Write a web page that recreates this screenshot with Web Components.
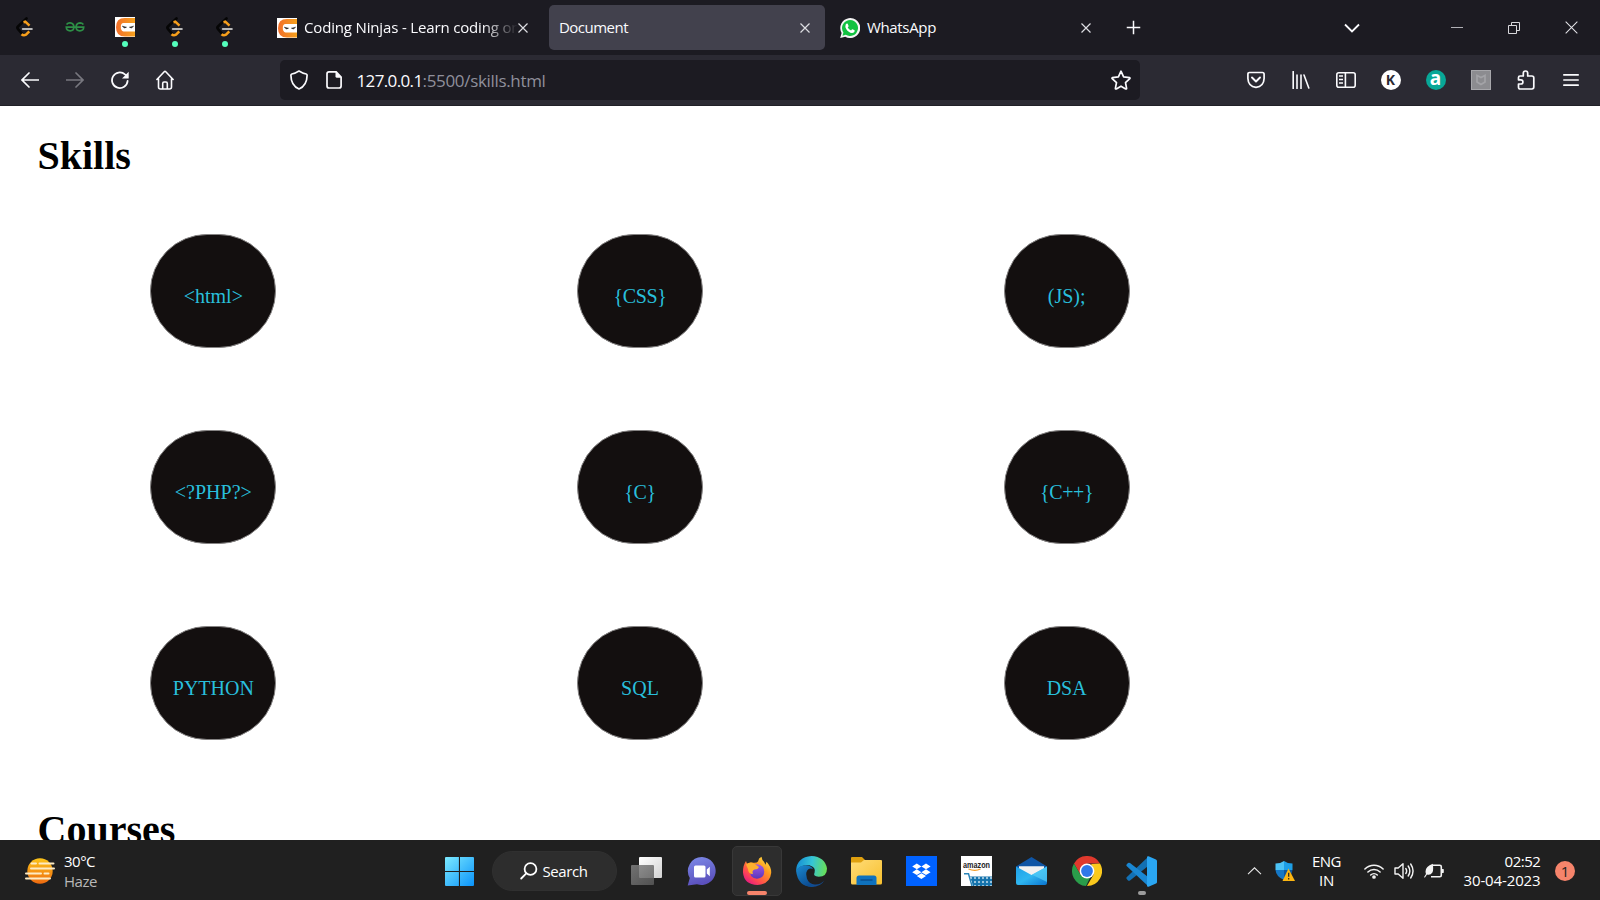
<!DOCTYPE html>
<html lang="en">
<head>
<meta charset="utf-8">
<title>Document</title>
<style>
  html, body { margin: 0; height: 100%; overflow: hidden; background: #fff; }
  body { font-family: "Open Sans", "Noto Sans", sans-serif; }
</style>
</head>
<body>
<desktop-screen></desktop-screen>
<script>
const LEET = `<svg viewBox="0 0 20 20"><path d="M11.500 1.500 3 9.500q-1.200 1.300 0 2.600l4.500 5" fill="none" stroke="#050505" stroke-width="2.600" stroke-linecap="round"/><path d="M8.500 5.200l1.800-.5 4.200 4M6.500 17.200q2 1.700 4.500.5l3.300-3.400" fill="none" stroke="#f79f1b" stroke-width="2.500"/><path d="M7.800 12h9" stroke="#b9b9b9" stroke-width="2.100" stroke-linecap="round"/></svg>`;

/* Icon name -> markup. Each drawing fills the box of its <ui-icon>. */
const ICONS = {
  leet: LEET,
  gfg: `<svg viewBox="0 0 20 20" fill="none" stroke="#2d8f46" stroke-width="1.700"><path d="M1.500 7.500Q3 5.800 5 5.900q3.900.3 3.900 4.100T5.200 13.800Q1.500 13.700 1.300 10.200H18.700Q18.500 13.700 14.800 13.800 11.100 13.800 11.100 10T15 5.900q2 0 3.400 1.600"/></svg>`,
  ninja: `<svg viewBox="0 0 20 20"><defs><linearGradient id="n"><stop stop-color="#f36f2b"/><stop offset="1" stop-color="#f5a11d"/></linearGradient></defs><path fill="#fff" d="M0 0h20v20H0z"/><path fill="url(#n)" d="M20 1v5H8.500Q5.800 6.200 5.800 10t2.700 4.500H20v5H10Q1 19.500 1 10.200T10 1z"/><path d="M7.300 9.200l4.200 1q-2 2-4.200-1M18.600 9.200l-4.200 1q2 2 4.200-1" fill="#222" stroke="#222" stroke-width=".5"/></svg>`,
  whatsapp: `<svg viewBox="0 0 20 20"><path fill="#f4f4f4" d="M.2 20 1.600 15A10 10 0 1 1 5.300 18.700z"/><path fill="#12c241" d="M2.500 17.700l.9-3.200A8 8 0 1 1 5.800 16.800z"/><path fill="#fff" d="M5.700 6.600q1-1.700 2-.8l.9 2.200q0 .6-.9 1.400 1.100 2.200 3.400 3 .8-1.300 1.400-1.200l2.100 1.100q.5 2.300-2.600 2.800-3.500-.3-5.800-4-1.400-2.300-.5-4.500z"/></svg>`,
  x: `<svg viewBox="0 0 10 10"><path d="M.5.5l9 9M9.500.5l-9 9" stroke="#dddde2" stroke-width="1.200"/></svg>`,
  plus: `<svg viewBox="0 0 16 16"><path d="M8 .8v14.400M.8 8h14.400" stroke="#fbfbfe" stroke-width="1.600"/></svg>`,
  down: `<svg viewBox="0 0 16 10"><path d="M1 1.500l7 7 7-7" fill="none" stroke="#fbfbfe" stroke-width="1.800"/></svg>`,
  min: `<svg viewBox="0 0 12 12"><path d="M0 5.500h12" stroke="#b0b0b5"/></svg>`,
  restore: `<svg viewBox="0 0 12 12" fill="none" stroke="#d8d8dc"><path d="M.5 3.500h8v8h-8zM3.500 3V.5h8v8H9"/></svg>`,
  close: `<svg viewBox="0 0 14 14"><path d="M.7.7l12.600 12.600M13.300.7.7 13.300" stroke="#e4e4e8" stroke-width="1.100"/></svg>`,
  back: `<svg viewBox="0 0 18 18" fill="none" stroke="#fbfbfe" stroke-width="1.700" stroke-linecap="round"><path d="M1 9h16.500M8 2 1 9l7 7"/></svg>`,
  forward: `<svg viewBox="0 0 18 18" fill="none" stroke="#78777f" stroke-width="1.700" stroke-linecap="round"><path d="M.5 9H17M10 2l7 7-7 7"/></svg>`,
  reload: `<svg viewBox="0 0 18 18"><path d="M16.600 10A7.800 7.800 0 1 1 14 3.400L16 5" fill="none" stroke="#fbfbfe" stroke-width="1.800" stroke-linecap="round"/><path d="M17.700.8v6.300q0 .5-.5.500H11z" fill="#fbfbfe"/></svg>`,
  home: `<svg viewBox="0 0 18 20" fill="none" stroke="#fbfbfe" stroke-width="1.600" stroke-linejoin="round" stroke-linecap="round"><path d="M.9 9.500 8.200 1.800q.8-.8 1.600 0l7.300 7.700M2.500 8.500v8.500q0 2 2 2h9q2 0 2-2V8.500M6.700 19v-5.500q0-1.500 1.300-1.500h2q1.300 0 1.300 1.500V19"/></svg>`,
  shield: `<svg viewBox="0 0 18 20"><path d="M9 1q4 2.400 7.200 3 .9.200.9 1.200Q17 15.500 9 19 1 15.500.9 5.200q0-1 .9-1.200Q5 3.400 9 1z" fill="none" stroke="#fbfbfe" stroke-width="1.700" stroke-linejoin="round"/></svg>`,
  page: `<svg viewBox="0 0 16 18"><path d="M3 .9h7.200L15.100 6v9q0 2-2 2H3q-2 0-2-2V2.900q0-2 2-2z" fill="none" stroke="#fbfbfe" stroke-width="1.700"/><path d="M9.500.8v4.500q0 1.500 1.500 1.500h4.500z" fill="#fbfbfe"/></svg>`,
  star: `<svg viewBox="0 0 20 20"><path d="M10 1.200l2.600 5.600 5.900.8q.8.300.3 1l-4.300 4.100 1.100 5.700q0 .9-.9.500L10 16.200l-4.700 2.700q-.9.300-.9-.5l1.100-5.700L1.200 8.600q-.5-.7.300-1l5.900-.8z" fill="none" stroke="#fbfbfe" stroke-width="1.700" stroke-linejoin="round"/></svg>`,
  pocket: `<svg viewBox="0 0 18 18" fill="none" stroke="#fbfbfe" stroke-linecap="round" stroke-linejoin="round"><path d="M2.600 1.500h12.800q1.700 0 1.700 1.700v4.300Q16.800 15.500 9 16.300 1.200 15.500.9 7.500V3.200q0-1.700 1.700-1.700z" stroke-width="1.700"/><path d="M5 6.500l4 4 4-4" stroke-width="1.900"/></svg>`,
  library: `<svg viewBox="0 0 18 18"><path d="M1.200.500v17M5 4v13.500M9 4v13.500M12 4l4.800 13" fill="none" stroke="#fbfbfe" stroke-width="1.600" stroke-linecap="round"/></svg>`,
  sidebar: `<svg viewBox="0 0 20 16" fill="none" stroke="#fbfbfe" stroke-width="1.600"><rect x=".8" y=".8" width="18.400" height="14.400" rx="2"/><path d="M9.400 1v14M3 4h4M3 7.500h4M3 11h4"/></svg>`,
  mcafee: `<svg viewBox="0 0 20 20"><rect x=".5" y=".5" width="19" height="19" fill="#8c8c90" stroke="#a7a7ab"/><path d="M6 5.500l4 2 4-2v6.500l-4 2.500L6 12z" fill="none" stroke="#a3a3a7" stroke-width="1.700"/></svg>`,
  puzzle: `<svg viewBox="0 0 18 20"><path d="M6.300 6V3.200a2.200 2.200 0 0 1 4.400 0V6h4.200q1.900 0 1.900 1.900v9.200q0 1.900-1.900 1.900H3.200q-1.700 0-1.700-1.700V14h2.300a2 2 0 0 0 0-4.200H1.500V7.500Q1.500 6 3 6z" fill="none" stroke="#fbfbfe" stroke-width="1.700" stroke-linejoin="round"/></svg>`,
  menu: `<svg viewBox="0 0 16 14"><path d="M.8 1.800h14.400M.8 7h14.400M.8 12.200h14.400" stroke="#fbfbfe" stroke-width="1.700" stroke-linecap="round"/></svg>`,
  haze: `<svg viewBox="0 0 30 26"><defs><linearGradient id="z" x2="0" y2="1"><stop stop-color="#fcc419"/><stop offset="1" stop-color="#ee6a10"/></linearGradient></defs><circle cx="15" cy="13" r="12.700" fill="url(#z)"/><g stroke-width="2" stroke-linecap="round" stroke="#fdebc4"><path d="M6.500 5.500H11M14.500 5.500h14M6 10.500h23M1 15.500h15M19.500 15.500h4M1 20.500h24"/></g></svg>`,
  win: `<svg viewBox="0 0 29 29"><defs><linearGradient id="w" x2="1" y2="1"><stop stop-color="#7ceaff"/><stop offset="1" stop-color="#0a93fa"/></linearGradient></defs><path fill="url(#w)" d="M1 0h12.900v13.900H0V1q0-1 1-1zM15 0h13q1 0 1 1v12.900H15zM0 15h13.900v14H1q-1 0-1-1zM15 15h14v13q0 1-1 1H15z"/></svg>`,
  search: `<svg viewBox="0 0 18 18" fill="none" stroke="#fff" stroke-width="1.800" stroke-linecap="round"><circle cx="10.500" cy="7" r="5.900"/><path d="M6.300 11.400 1.200 16.500"/></svg>`,
  tasks: `<svg viewBox="0 0 31 28"><defs><linearGradient id="t" x2="1" y2="1"><stop stop-color="#fff"/><stop offset="1" stop-color="#d2d2d2"/></linearGradient><linearGradient id="t2" x2="1" y2="1"><stop stop-color="#808080"/><stop offset="1" stop-color="#5a5a5a"/></linearGradient></defs><rect x="8" y="0" width="23" height="21" rx="1" fill="url(#t)"/><rect x="0" y="8" width="23" height="20" rx="1" fill="url(#t2)" opacity=".85"/></svg>`,
  chat: `<svg viewBox="0 0 29 29"><defs><linearGradient id="c" x2=".3" y2="1"><stop stop-color="#7d8be8"/><stop offset="1" stop-color="#5b50bd"/></linearGradient></defs><path d="M15 0a14 14 0 1 1-5 27.200L.7 28.500 2.800 21A14 14 0 0 1 15 0z" fill="url(#c)"/><rect x="7" y="8.500" width="11.500" height="12" rx="1.500" fill="#fff"/><path d="M19.800 12.500l3-2.700v9.500l-3-2.700z" fill="#fff"/></svg>`,
  firefox: `<svg viewBox="0 0 30 30"><defs><linearGradient id="f" x1="1" x2=".2" y2="1"><stop stop-color="#fff44f"/><stop offset=".4" stop-color="#ff9a1e"/><stop offset=".75" stop-color="#ff4a50"/><stop offset="1" stop-color="#e31587"/></linearGradient><linearGradient id="f2" x2="0" y2="1"><stop stop-color="#a058e8"/><stop offset="1" stop-color="#5a37b8"/></linearGradient></defs><path fill="url(#f)" d="M4 5q.3 2 2 3 2-1.700 5-1.300Q15 7 16 5.500 16.500 2 19.500.8q.3 3 2.500 5l1.500 3 1-3Q29.500 11 29.200 17 28 28 15.500 29 2 28.500 1 16.500.8 9.500 4 5z"/><path d="M10 10q6-4 11 1 3 6-1 10-6 4-11-1-1.500-4 0-6z" fill="url(#f2)"/><path d="M4 8.500Q8 5 12 7.500l5 3.500q-1 2.500-4.500 2.500-3 1-1.500 4.500-5 0-5-5z" fill="#ffb02e"/></svg>`,
  edge: `<svg viewBox="0 0 30 30"><defs><linearGradient id="e1" x1="0" y1=".5" x2="1" y2=".6"><stop stop-color="#168fd5"/><stop offset=".5" stop-color="#36c5d6"/><stop offset="1" stop-color="#6ae052"/></linearGradient><linearGradient id="e2" x2=".6" y2="1"><stop stop-color="#1a8bd2"/><stop offset="1" stop-color="#0c4c91"/></linearGradient></defs><path fill="#124c92" d="M10 13q-2 13 8 14.500 6 .4 9.500-4Q24 30 15 30 4 29 2 16z"/><path fill="url(#e1)" d="M0 14Q1 1 15 0q13 .8 15 12 0 8-8 8-6-.4-4-4 1.500-5-5-7Q5 8 0 14z"/><path fill="url(#e2)" d="M0 14Q5 7.500 12.500 9.500q3 1 4 3Q11.500 11 10 16q-1 9 7.500 13.600Q2 31 0 14z"/></svg>`,
  folder: `<svg viewBox="0 0 31 28"><defs><linearGradient id="o" x2="1" y2="1"><stop stop-color="#ffdc78"/><stop offset="1" stop-color="#f8c02e"/></linearGradient></defs><path fill="#dfa00f" d="M1 0h10l3 3-2 3H0V1q0-1 1-1z"/><path fill="url(#o)" d="M0 5.500h10L13 3h17q1 0 1 1v22q0 1.500-1.500 1.500h-28Q0 27.500 0 26z"/><path fill="#0f72be" d="M5.500 28v-7q0-2.500 2.500-2.500h15q2.500 0 2.500 2.500v7z"/><path d="M9.500 23h12" stroke="#0a4f8f" stroke-width="1.500"/></svg>`,
  dropbox: `<svg viewBox="0 0 31 30"><path fill="#0062ff" d="M0 0h31v30H0z"/><path fill="#fff" d="M10.800 7.500l4.600 2.900-4.600 2.900-4.600-2.900zM20 7.500l4.600 2.900-4.600 2.900-4.600-2.900zM10.800 13.300l4.600 2.900-4.600 2.900-4.600-2.900zM20 13.300l4.600 2.900-4.600 2.900-4.600-2.900zM15.400 17.200l4.600 2.900-4.600 2.900-4.600-2.900z"/></svg>`,
  amazon: `<svg viewBox="0 0 31 30"><defs><pattern id="am" width="4" height="4" patternUnits="userSpaceOnUse"><path fill="#1372ac" d="M0 0h4v4H0z"/><path d="M2 .8l1.200 1.200L2 3.200.8 2z" fill="#cfe5f2"/></pattern></defs><path fill="#fff" d="M0 0h31v30H0z"/><path d="M7.500 13q6.500 2.800 12 0" fill="none" stroke="#f49b24" stroke-width="1.300"/><path d="M3 17.800h4.500L11 30" fill="none" stroke="#2a85ba" stroke-width="1.500"/><path fill="url(#am)" d="M9 20.500h22V30H12z"/><text x="2" y="11.500" textLength="27" lengthAdjust="spacingAndGlyphs" font-family="Liberation Sans" font-weight="700" font-size="8.500" fill="#222">amazon</text></svg>`,
  mail: `<svg viewBox="0 0 31 28"><defs><linearGradient id="m" x2="1" y2="1"><stop stop-color="#1fa0e8"/><stop offset=".5" stop-color="#2fb6f0"/><stop offset="1" stop-color="#0a74cf"/></linearGradient></defs><path fill="#0f55a5" d="M0 9.500 15.500 0 31 9.500V15H0z"/><path fill="#f1f1f1" d="M3 9.300h25v4L16 21 3 14z"/><path fill="url(#m)" d="M0 9.500 15.500 18 31 9.500V26q0 2-2 2H2q-2 0-2-2z"/><path fill="#54cdf8" d="M31 9.500V25L16 17.700z" opacity=".7"/></svg>`,
  chrome: `<svg viewBox="0 0 30 30"><path fill="#e0392d" d="M2 7.500a15 15 0 0 1 26 0H15L8.500 18.700z"/><path fill="#fbc91d" d="M28 7.500A15 15 0 0 1 15 30l6.500-11.300Q23 13 19 8z"/><path fill="#2a9d4a" d="M2 7.500l6.500 11.200Q12 23 18.200 21.500L14 30A15 15 0 0 1 2 7.500z"/><circle cx="15" cy="15" r="7.400" fill="#fff"/><circle cx="15" cy="15" r="5.900" fill="#2f78ea"/></svg>`,
  vscode: `<svg viewBox="0 0 31 31"><path fill="#1270b4" d="M22 1 24 8.500 4 24.500q-1 .5-2 0L.6 22.800q-.6-.8 0-1.600z"/><path fill="#1a87d2" d="M22 30l2-7.500L4 7Q3 6.300 2 7L.6 8.400q-.6.800 0 1.600z"/><path fill="#2aa6f2" d="M22.500.3 30 3.500q1 .5 1 1.500v21q0 1-1 1.500l-7.500 3.200q-1.500.3-1.500-1V1.300q0-1.300 1.500-1z"/></svg>`,
  up: `<svg viewBox="0 0 14 8"><path d="M.5 7.200 7 .8l6.500 6.400" fill="none" stroke="#e8e8e8" stroke-width="1.100"/></svg>`,
  defender: `<svg viewBox="0 0 20 20"><path fill="#1e9fe6" d="M9 0q3.500 2.500 8.500 2.500V9H9z"/><path fill="#4cc3f5" d="M9 0v9H.5V2.500Q5.500 2.500 9 0z"/><path fill="#1477c5" d="M.5 9H9v10Q1 15.500.5 9z"/><path fill="#0b57a0" d="M9 9h8.500Q17 15.500 9 19z"/><path fill="#fcb612" d="M13.500 7.500 20 20H7.500z"/><path d="M13.700 11.700v4M13.700 17v1.500" stroke="#222" stroke-width="1.200"/></svg>`,
  wifi: `<svg viewBox="0 0 20 16" fill="none" stroke="#f4f4f4" stroke-width="1.500" stroke-linecap="round"><path d="M.9 6a13 13 0 0 1 18.200 0M3.900 9a8.700 8.700 0 0 1 12.200 0M6.700 12a4.700 4.700 0 0 1 6.600 0"/><circle cx="10" cy="14" r="1.100" fill="#fff"/></svg>`,
  sound: `<svg viewBox="0 0 20 18" fill="none" stroke="#f4f4f4" stroke-width="1.400" stroke-linecap="round" stroke-linejoin="round"><path d="M1 6h3.200L9 1.800v14.400L4.200 12H1zM11.800 6.500q1.700 2.500 0 5M14.200 4q3.300 5 0 10M16.700 2q4.700 7 0 14"/></svg>`,
  battery: `<svg viewBox="0 0 20 16"><path d="M8.500 2.200h7.300q1.500 0 1.500 1.500v8.600q0 1.500-1.500 1.500H7" fill="none" stroke="#f4f4f4" stroke-width="1.600"/><path d="M18 6h1.200q.6 0 .6.700v2.600q0 .7-.6.700H18z" fill="#f4f4f4"/><path d="M8.800.8Q9.700 7 8.400 9.500 6.500 12.500 3 11.500L.8 14.700l-.7-.6L2 11Q-.3 4.200 8.800.8z" fill="#f4f4f4"/></svg>`
};

function define(name, markup, setup) {
  const template = document.createElement('template');
  template.innerHTML = markup;
  customElements.define(name, class extends HTMLElement {
    connectedCallback() {
      if (this.shadowRoot) return;
      this.attachShadow({ mode: 'open' }).append(template.content.cloneNode(true));
      if (setup) setup(this, this.shadowRoot);
    }
  });
}

/* <ui-icon name w h> */
define('ui-icon', `<style>:host{display:block;flex:none}svg{display:block;width:100%;height:100%}</style>`, (el, root) => {
  el.style.width = el.getAttribute('w') + 'px';
  el.style.height = el.getAttribute('h') + 'px';
  root.innerHTML += ICONS[el.getAttribute('name')];
});

/* <fit-label w>: one line of text, tracked to the given width */
define('fit-label', `<style>:host{display:block;flex:none;white-space:pre}span{display:inline-block}</style><span><slot></slot></span>`, (el, root) => {
  const span = root.querySelector('span');
  const gap = el.getAttribute('w') - span.getBoundingClientRect().width;
  span.style.letterSpacing = gap / el.textContent.length + 'px';
});

/* One skill pill */
define('skill-badge', `<style>
  :host{display:flex;justify-content:center;align-items:center;height:196px}
  div{box-sizing:border-box;width:126px;height:114px;border:1px solid #858383;border-radius:62.5px;background:#130f0f;color:#29bfdc;
    font:20px/23px "Liberation Serif",serif;text-align:center;padding-top:50px}
  :host([tight]) div{letter-spacing:-.4px}
</style><div><slot></slot></div>`);

define('skill-grid', `<style>:host{display:grid;grid-template-columns:repeat(3,1fr);width:1280px}</style><slot></slot>`);

define('page-view', `<style>
  :host{display:block;flex:1;overflow:hidden;min-height:0;background:#fff;color:#000}
  h1{margin:0;padding-left:37.500px;font:bold 40px/46px "Liberation Serif",serif}
  h1.a{padding-top:27px;margin-bottom:14px}
  h1.b{padding-top:26px}
</style>
<h1 class="a">Skills</h1>
<skill-grid>
  <skill-badge>&lt;html&gt;</skill-badge><skill-badge tight>{CSS}</skill-badge><skill-badge>(JS);</skill-badge>
  <skill-badge>&lt;?PHP?&gt;</skill-badge><skill-badge tight>{C}</skill-badge><skill-badge tight>{C++}</skill-badge>
  <skill-badge>PYTHON</skill-badge><skill-badge>SQL</skill-badge><skill-badge>DSA</skill-badge>
</skill-grid>
<h1 class="b">Courses</h1>`);

define('pinned-tab', `<style>
  :host{display:flex;flex-direction:column;align-items:center;width:50px;height:55px;box-sizing:border-box;padding-top:17px;flex:none}
  i{display:none;width:6px;height:6px;border-radius:50%;background:#54ffbd;margin-top:4px}
  :host([live]) i{display:block}
</style><slot></slot><i></i>`);

define('browser-tab', `<style>
  :host{display:flex;align-items:center;box-sizing:border-box;width:276px;height:45px;padding:0 15px 0 10px;border-radius:5px;color:#fbfbfe;font-size:15px;flex:none}
  :host([active]){background:#42414d}
  .t{display:flex;flex:1;min-width:0;overflow:hidden;gap:7px;align-items:center}
  ::slotted(fit-label){padding-bottom:1px}
  :host([fade]) .t{-webkit-mask:linear-gradient(90deg,#000 205px,transparent 241px);mask:linear-gradient(90deg,#000 205px,transparent 241px)}
</style><div class="t"><slot></slot></div><ui-icon name="x" w="10" h="10"></ui-icon>`);

define('tab-strip', `<style>
  :host{display:flex;align-items:center;height:55px;background:#1c1b22}
  .first{margin-left:17px;margin-right:6px}
  .wa{margin-left:5px}
  .plus{margin-left:20px}
  .down{margin-left:203px}
  .controls{display:flex;align-items:center;margin-left:91px;gap:45px}
</style>
<pinned-tab><ui-icon name="leet" w="20" h="20"></ui-icon></pinned-tab>
<pinned-tab><ui-icon name="gfg" w="20" h="20"></ui-icon></pinned-tab>
<pinned-tab live><ui-icon name="ninja" w="20" h="20"></ui-icon></pinned-tab>
<pinned-tab live><ui-icon name="leet" w="20" h="20"></ui-icon></pinned-tab>
<pinned-tab live><ui-icon name="leet" w="20" h="20"></ui-icon></pinned-tab>
<browser-tab class="first" fade><ui-icon name="ninja" w="20" h="20"></ui-icon><fit-label w="220">Coding Ninjas - Learn coding onl</fit-label></browser-tab>
<browser-tab active><fit-label w="69">Document</fit-label></browser-tab>
<browser-tab class="wa"><ui-icon name="whatsapp" w="20" h="20"></ui-icon><fit-label w="69">WhatsApp</fit-label></browser-tab>
<ui-icon class="plus" name="plus" w="15" h="15"></ui-icon>
<ui-icon class="down" name="down" w="16" h="10"></ui-icon>
<div class="controls"><ui-icon name="min" w="12" h="12"></ui-icon><ui-icon name="restore" w="12" h="12"></ui-icon><ui-icon name="close" w="13" h="13"></ui-icon></div>`);

define('round-badge', `<style>
  :host{display:flex;align-items:center;justify-content:center;width:20px;height:20px;border-radius:50%;flex:none;font:15px/20px "Open Sans",sans-serif}
</style><slot></slot>`);

define('address-bar', `<style>
  :host{display:flex;align-items:center;box-sizing:border-box;width:860px;height:40px;padding:0 9px 0 10px;border-radius:5px;background:#1c1b22;font-size:17px;flex:none}
  .page{margin:0 14.500px 0 18px}
  .host{color:#fbfbfe}.rest{color:#8f8f9b;flex:1}
</style>
<ui-icon name="shield" w="18" h="20"></ui-icon><ui-icon class="page" name="page" w="16" h="18"></ui-icon>
<fit-label class="host" w="66">127.0.0.1</fit-label><fit-label class="rest" w="123">:5500/skills.html</fit-label>
<ui-icon name="star" w="20" h="20"></ui-icon>`);

define('tool-bar', `<style>
  :host{display:flex;align-items:center;height:50px;background:#2b2a33;border-bottom:1px solid #202027}
  .nav{display:grid;grid-template-columns:repeat(4,45px);place-items:center;padding-left:7px;width:180px}
  address-bar{margin-left:93px}
  .ext{display:grid;grid-template-columns:repeat(8,45px);place-items:center;margin-left:93px}
  .k{background:#fff;color:#2b2a33;font:bold 14px/20px "Open Sans",sans-serif}
  .a{background:#08a797;color:#fff;font:bold 19px/20px "Open Sans",sans-serif;}
  .a span{margin-top:-4px}
</style>
<div class="nav"><ui-icon name="back" w="18" h="18"></ui-icon><ui-icon name="forward" w="18" h="18"></ui-icon><ui-icon name="reload" w="18" h="18"></ui-icon><ui-icon name="home" w="18" h="20"></ui-icon></div>
<address-bar></address-bar>
<div class="ext">
<ui-icon name="pocket" w="18" h="18"></ui-icon><ui-icon name="library" w="18" h="18"></ui-icon><ui-icon name="sidebar" w="20" h="16"></ui-icon>
<round-badge class="k">K</round-badge><round-badge class="a"><span>a</span></round-badge>
<ui-icon name="mcafee" w="20" h="20"></ui-icon><ui-icon name="puzzle" w="18" h="20"></ui-icon><ui-icon name="menu" w="16" h="14"></ui-icon></div>`);

/* App button with an optional running marker below its icon */
define('app-button', `<style>
  :host{display:flex;align-items:center;justify-content:center;box-sizing:border-box;position:relative;width:50px;height:50px;margin:0 2.500px;border-radius:5px;flex:none}
  :host([active]){background:#2d2d2d;border:1px solid #383838}
  i{display:none;position:absolute;bottom:0;left:50%;transform:translateX(-50%);height:4px;border-radius:2px}
  :host([active]) i{display:block;width:20px;background:#f6846b}
  :host([running]) i{display:block;width:8px;background:#9c9c9c;bottom:1px}
</style><slot></slot><i></i>`);

define('task-bar', `<style>
  :host{display:flex;align-items:center;box-sizing:border-box;height:60px;background:#202020;color:#fff;padding-top:2px;font-size:15px;flex:none}
  .weather{display:flex;align-items:center;gap:9px;width:407px;padding-left:25px}
  .weather div{line-height:20px;padding-bottom:1px}
  .haze{color:#b8b8b8}
  .apps{display:flex;align-items:center}
  .search{display:flex;align-items:center;box-sizing:border-box;width:125px;height:40px;margin:0 2.500px 0 4.500px;padding-left:27px;gap:5px;border-radius:20px;background:#2d2d2d;border:1px solid #303030}
  .tray{display:flex;align-items:center;margin-left:77.500px}
  .two{line-height:19px;padding-bottom:1px}
  .lang{display:flex;flex-direction:column;align-items:center;margin:0 22.500px 0 17.500px}
  .status{display:flex;align-items:center;gap:10px}
  .clock{display:flex;flex-direction:column;align-items:flex-end;margin-left:20px;margin-right:14.500px}
  round-badge{background:#f6846b;color:#222}
</style>
<div class="weather"><ui-icon name="haze" w="30" h="26"></ui-icon><div><fit-label w="31">30°C</fit-label><fit-label class="haze" w="33">Haze</fit-label></div></div>
<div class="apps">
<app-button><ui-icon name="win" w="29" h="29"></ui-icon></app-button>
<div class="search"><ui-icon name="search" w="18" h="18"></ui-icon><fit-label w="45">Search</fit-label></div>
<app-button><ui-icon name="tasks" w="31" h="28"></ui-icon></app-button>
<app-button><ui-icon name="chat" w="29" h="29"></ui-icon></app-button>
<app-button active><ui-icon name="firefox" w="30" h="30"></ui-icon></app-button>
<app-button><ui-icon name="edge" w="31" h="31"></ui-icon></app-button>
<app-button><ui-icon name="folder" w="31" h="28"></ui-icon></app-button>
<app-button><ui-icon name="dropbox" w="31" h="30"></ui-icon></app-button>
<app-button><ui-icon name="amazon" w="31" h="30"></ui-icon></app-button>
<app-button><ui-icon name="mail" w="31" h="28"></ui-icon></app-button>
<app-button><ui-icon name="chrome" w="30" h="30"></ui-icon></app-button>
<app-button running><ui-icon name="vscode" w="31" h="31"></ui-icon></app-button>
</div>
<div class="tray">
<ui-icon name="up" w="15" h="8"></ui-icon><ui-icon name="defender" w="20" h="20" style="margin-left:13px"></ui-icon>
<div class="two lang"><fit-label w="29">ENG</fit-label><fit-label w="15">IN</fit-label></div>
<div class="status"><ui-icon name="wifi" w="20" h="16"></ui-icon><ui-icon name="sound" w="20" h="18"></ui-icon><ui-icon name="battery" w="20" h="16"></ui-icon></div>
<div class="two clock"><fit-label w="36">02:52</fit-label><fit-label w="77">30-04-2023</fit-label></div>
<round-badge>1</round-badge>
</div>`);

define('desktop-screen', `<style>:host{display:flex;flex-direction:column;width:1600px;height:900px;overflow:hidden}</style>
<tab-strip></tab-strip><tool-bar></tool-bar><page-view></page-view><task-bar></task-bar>`);
</script>
</body>
</html>
